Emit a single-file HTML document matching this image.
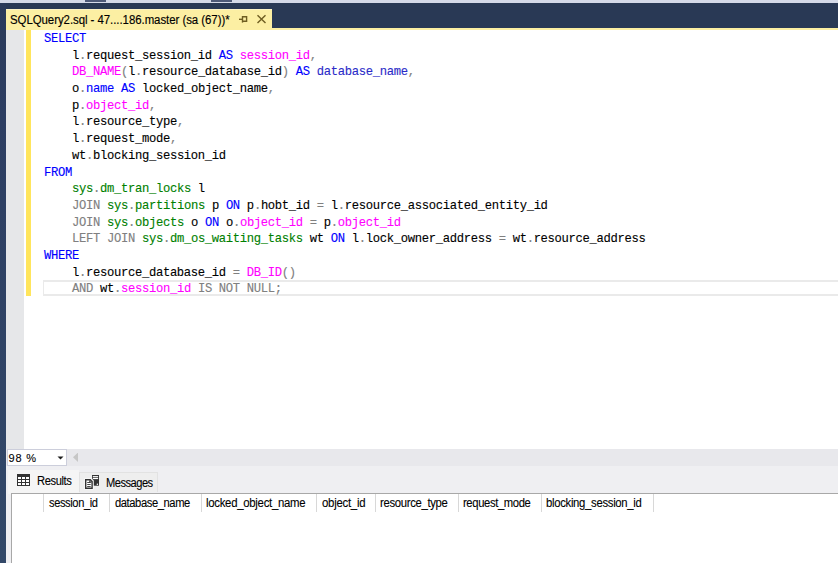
<!DOCTYPE html>
<html><head><meta charset="utf-8">
<style>
*{margin:0;padding:0;box-sizing:border-box}
html,body{width:838px;height:563px;overflow:hidden;background:#293955;font-family:"Liberation Sans",sans-serif}
.abs{position:absolute}
#topband{left:0;top:0;width:838px;height:3px;background:#D5DAE8}
.seg{top:0;height:2px;width:21px;background:#4E5A78}
#leftstrip{left:0;top:3px;width:6px;height:560px;background:linear-gradient(#2A3A59,#2D3E62 20%,#324868)}
#tab{left:6px;top:9px;width:266px;height:19px;background:#FCEFA3;border-top:1px solid #FDF4C6}
#tabtext{left:9.6px;top:11.5px;font-size:12px;letter-spacing:-0.05px;transform:scaleX(0.952);transform-origin:0 0;color:#000;-webkit-text-stroke:0.15px #000;white-space:nowrap;line-height:16px}
#ystrip{left:6px;top:28px;width:832px;height:2px;background:#FCEFA3}
#editor{left:6px;top:30px;width:832px;height:419px;background:#fff}
#margin{left:6px;top:30px;width:18px;height:419px;background:#E6E7E9}
#chg{left:26px;top:30px;width:4.5px;height:266px;background:#FFE55C}
#curline{left:43px;top:280px;width:800px;height:15.8px;border:2px solid #EAEAEA;border-left-width:1.5px;border-right:none}
#code{left:44px;top:31px;font-family:"Liberation Mono",monospace;font-size:12.2px;letter-spacing:-0.321px;line-height:16.68px;white-space:pre;color:#000;-webkit-text-stroke:0.12px currentColor}
.k{color:#0000FF}.f{color:#FF00FF}.g{color:#808080}.s{color:#008000}.n{color:#2B2BC8}
#hbar{left:6px;top:449px;width:832px;height:17px;background:#E8E8EC}
#combo{left:7px;top:449px;width:60px;height:17px;background:#fff;border:1px solid #CCCEDB}
#combotext{left:8.6px;top:452px;font-size:11px;letter-spacing:0.75px;line-height:13px;color:#000;-webkit-text-stroke:0.1px #000}
#results{left:6px;top:466px;width:832px;height:97px;background:#EFEFF2}
#rtab{left:8px;top:470px;width:71px;height:24px;background:#F5F5F5}
#mtab{left:79px;top:472px;width:79px;height:20px;background:#EEEEEE;border:1px solid #E2E2E2;border-bottom:none}
#grid{left:11px;top:493px;width:827px;height:70px;background:#fff;border-top:1px solid #A8A8A8;border-left:1px solid #A8A8A8}
.gtext{top:494.5px;font-size:12px;line-height:16px;color:#000;white-space:nowrap;-webkit-text-stroke:0.1px #000}
.tabt{font-size:12px;line-height:16px;color:#000;white-space:nowrap;-webkit-text-stroke:0.1px #000}
.gsep{top:494px;width:1px;height:18px;background:#D8D8D8}
</style></head><body>
<div id="topband" class="abs"></div>
<div class="abs seg" style="left:85px"></div>
<div class="abs seg" style="left:211px"></div>
<div id="leftstrip" class="abs"></div>
<div id="tab" class="abs"></div>
<div id="tabtext" class="abs">SQLQuery2.sql - 47....186.master (sa (67))*</div>
<svg class="abs" style="left:236px;top:12px" width="36" height="14" viewBox="0 0 36 14">
  <g fill="none" stroke="#6F5E22" stroke-width="1.4">
    <path d="M3 7.3H7"/><path d="M6.5 4V10.6"/><path d="M7 4.8H10.6V9.3H7"/>
    <path d="M21.5 3.2L29.5 11M29.5 3.2L21.5 11"/>
  </g>
</svg>
<div id="ystrip" class="abs"></div>
<div id="editor" class="abs"></div>
<div id="margin" class="abs"></div>
<div id="chg" class="abs"></div>
<div id="curline" class="abs"></div>
<div id="code" class="abs"><span class="k">SELECT</span>
    l<span class="g">.</span>request_session_id <span class="k">AS</span> <span class="f">session_id</span><span class="g">,</span>
    <span class="f">DB_NAME</span><span class="g">(</span>l<span class="g">.</span>resource_database_id<span class="g">)</span> <span class="k">AS</span> <span class="n">database_name</span><span class="g">,</span>
    o<span class="g">.</span><span class="k">name</span> <span class="k">AS</span> locked_object_name<span class="g">,</span>
    p<span class="g">.</span><span class="f">object_id</span><span class="g">,</span>
    l<span class="g">.</span>resource_type<span class="g">,</span>
    l<span class="g">.</span>request_mode<span class="g">,</span>
    wt<span class="g">.</span>blocking_session_id
<span class="k">FROM</span>
    <span class="s">sys</span><span class="g">.</span><span class="s">dm_tran_locks</span> l
    <span class="g">JOIN</span> <span class="s">sys</span><span class="g">.</span><span class="s">partitions</span> p <span class="k">ON</span> p<span class="g">.</span>hobt_id <span class="g">=</span> l<span class="g">.</span>resource_associated_entity_id
    <span class="g">JOIN</span> <span class="s">sys</span><span class="g">.</span><span class="s">objects</span> o <span class="k">ON</span> o<span class="g">.</span><span class="f">object_id</span> <span class="g">=</span> p<span class="g">.</span><span class="f">object_id</span>
    <span class="g">LEFT JOIN</span> <span class="s">sys</span><span class="g">.</span><span class="s">dm_os_waiting_tasks</span> wt <span class="k">ON</span> l<span class="g">.</span>lock_owner_address <span class="g">=</span> wt<span class="g">.</span>resource_address
<span class="k">WHERE</span>
    l<span class="g">.</span>resource_database_id <span class="g">=</span> <span class="f">DB_ID</span><span class="g">()</span>
    <span class="g">AND</span> wt<span class="g">.</span><span class="f">session_id</span> <span class="g">IS NOT NULL;</span></div>
<div id="hbar" class="abs"></div>
<div id="combo" class="abs"></div>
<div id="combotext" class="abs">98 %</div>
<svg class="abs" style="left:56px;top:453px" width="86" height="12" viewBox="0 0 86 12">
  <path d="M1.5 3.5H7.5L4.5 6.5Z" fill="#1E1E1E"/>
  <path d="M22 -0.5V9L17 4.25Z" fill="#C6C6C6"/>
</svg>
<div id="results" class="abs"></div>
<div id="rtab" class="abs"></div>
<div id="mtab" class="abs"></div>
<div id="grid" class="abs"></div>
<svg class="abs" style="left:17px;top:474px" width="13" height="12" viewBox="0 0 13 12">
  <rect width="13" height="12" fill="#333333"/>
  <g fill="#FFFFFF">
    <rect x="1" y="3" width="3" height="2"/><rect x="5" y="3" width="3" height="2"/><rect x="9" y="3" width="3" height="2"/>
    <rect x="1" y="6" width="3" height="2"/><rect x="5" y="6" width="3" height="2"/><rect x="9" y="6" width="3" height="2"/>
    <rect x="1" y="9" width="3" height="2"/><rect x="5" y="9" width="3" height="2"/><rect x="9" y="9" width="3" height="2"/>
  </g>
</svg>
<div class="abs tabt" style="left:36.5px;top:473px;letter-spacing:-0.425px;transform:scaleX(0.9300);transform-origin:0 0">Results</div>
<svg class="abs" style="left:84px;top:474px" width="16" height="16" viewBox="0 0 16 16">
  <rect x="8" y="1" width="7" height="10.7" fill="#333333"/>
  <rect x="8.8" y="2.1" width="5.3" height="1.2" fill="#FFFFFF"/>
  <rect x="8.8" y="4" width="5.3" height="1.1" fill="#FFFFFF"/>
  <circle cx="13.4" cy="10.2" r="0.75" fill="#FFFFFF"/>
  <path d="M0.2 4H7.2L9.8 6.6V15.8H0.2Z" fill="#F7F7F7"/>
  <path d="M1 5H6.6L8.8 7.2V15H1Z" fill="#333333"/>
  <path d="M2.4 6.4H6L7.4 7.8V13.6H2.4Z" fill="#FFFFFF"/>
  <path d="M5.8 6.2V8H7.6" fill="none" stroke="#333333" stroke-width="1.1"/>
  <path d="M3.2 8.5H6.7M3.2 10.5H6.7M3.2 12.5H6.7" stroke="#333333" stroke-width="0.9"/>
</svg>
<div class="abs tabt" style="left:105.7px;top:475px;letter-spacing:-0.536px;transform:scaleX(0.9254);transform-origin:0 0">Messages</div>
<div class="abs gtext" style="left:48.5px;letter-spacing:-0.428px;transform:scaleX(0.9262);transform-origin:0 0">session_id</div>
<div class="gsep abs" style="left:43px"></div>
<div class="abs gtext" style="left:115px;letter-spacing:-0.450px;transform:scaleX(0.9330);transform-origin:0 0">database_name</div>
<div class="gsep abs" style="left:109px"></div>
<div class="abs gtext" style="left:205.5px;letter-spacing:-0.306px;transform:scaleX(0.9499);transform-origin:0 0">locked_object_name</div>
<div class="gsep abs" style="left:201px"></div>
<div class="abs gtext" style="left:321.5px;letter-spacing:-0.281px;transform:scaleX(0.9497);transform-origin:0 0">object_id</div>
<div class="gsep abs" style="left:316px"></div>
<div class="abs gtext" style="left:379.5px;letter-spacing:-0.337px;transform:scaleX(0.9429);transform-origin:0 0">resource_type</div>
<div class="gsep abs" style="left:375px"></div>
<div class="abs gtext" style="left:462.5px;letter-spacing:-0.400px;transform:scaleX(0.9377);transform-origin:0 0">request_mode</div>
<div class="gsep abs" style="left:458px"></div>
<div class="abs gtext" style="left:545.5px;letter-spacing:-0.319px;transform:scaleX(0.9426);transform-origin:0 0">blocking_session_id</div>
<div class="gsep abs" style="left:541px"></div>
<div class="gsep abs" style="left:653px"></div>
</body></html>
